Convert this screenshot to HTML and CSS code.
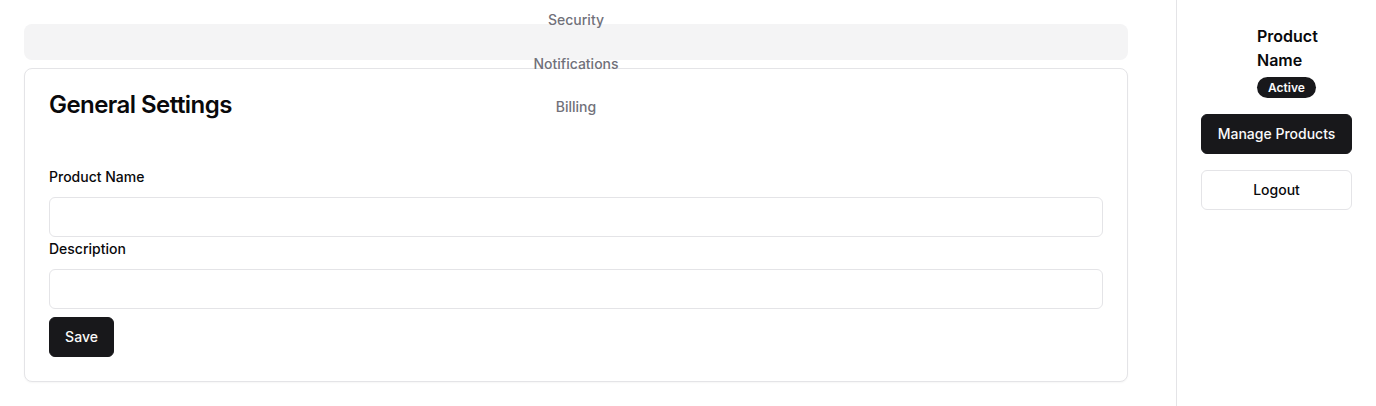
FILE: index.html
```html
<!DOCTYPE html>
<html lang="en">
<head>
<meta charset="utf-8">
<title>Settings</title>
<link rel="stylesheet" href="styles.css">
</head>
<body>
<div class="app">
  <main class="main">
    <div class="tablist">
      <div class="tabs">
        <button class="tab">Security</button>
        <button class="tab">Notifications</button>
        <button class="tab">Billing</button>
      </div>
    </div>
    <section class="card">
      <h2 class="card-title">General Settings</h2>
      <form class="form">
        <label class="label" for="pname">Product Name</label>
        <input class="input" id="pname" type="text">
        <label class="label label-2" for="pdesc">Description</label>
        <input class="input" id="pdesc" type="text">
        <button class="btn btn-primary btn-save" type="button">Save</button>
      </form>
    </section>
  </main>
  <aside class="sidebar">
    <div class="product">
      <div class="avatar"></div>
      <div class="product-info">
        <div class="product-name">Product Name</div>
        <span class="badge">Active</span>
      </div>
    </div>
    <button class="btn btn-primary btn-block">Manage Products</button>
    <button class="btn btn-outline btn-block">Logout</button>
  </aside>
</div>
</body>
</html>
```

FILE: styles.css
```css
* { box-sizing: border-box; }
html, body { margin: 0; padding: 0; }
body {
  font-family: Inter, "Noto Sans", "Liberation Sans", sans-serif;
  color: #09090b;
  background: #fff;
}
.app {
  display: flex;
  min-height: 100vh;
}
.main {
  flex: 1;
  padding: 24px 48px 24px 24px;
}
.tablist {
  height: 36px;
  background: #f4f4f5;
  border-radius: 8px;
  padding: 4px;
}
.tabs {
  display: flex;
  flex-direction: column;
  align-items: center;
  gap: 15.5px;
  margin-top: -22px;
}
.tab {
  font: inherit;
  font-size: 14px;
  font-weight: 500;
  line-height: 20px;
  color: #71717a;
  background: transparent;
  border: 0;
  padding: 4px 12px;
}
.card {
  margin-top: 8px;
  border: 1px solid #e4e4e7;
  border-radius: 8px;
  background: #fff;
  padding: 24px;
  box-shadow: 0 1px 2px rgba(0,0,0,0.04);
}
.card-title {
  margin: 0;
  font-size: 24px;
  font-weight: 600;
  line-height: 24px;
  letter-spacing: -0.55px;
}
.form {
  display: flex;
  flex-direction: column;
  align-items: flex-start;
  margin-top: 50px;
}
.label {
  font-size: 14px;
  font-weight: 500;
  line-height: 20px;
  color: #09090b;
  margin-bottom: 10px;
}
.label-2 { margin-top: 2px; }
.input {
  width: 100%;
  height: 40px;
  border: 1px solid #e4e4e7;
  border-radius: 6px;
  background: #fff;
  font: inherit;
  font-size: 14px;
  padding: 8px 12px;
}
.btn {
  font: inherit;
  font-size: 14px;
  font-weight: 500;
  line-height: 20px;
  height: 40px;
  border-radius: 6px;
  padding: 0 8px;
  white-space: nowrap;
  cursor: pointer;
}
.btn-primary {
  background: #18181b;
  color: #fafafa;
  border: 1px solid #18181b;
}
.btn-outline {
  background: #fff;
  color: #09090b;
  border: 1px solid #e4e4e7;
}
.btn-save {
  margin-top: 8px;
  width: 65px;
}
.sidebar {
  width: 200px;
  flex: none;
  border-left: 1px solid #e4e4e7;
  padding: 24px;
  display: flex;
  flex-direction: column;
  gap: 16px;
}
.product {
  display: flex;
  gap: 16px;
}
.avatar {
  width: 40px;
  height: 40px;
  flex: none;
}
.product-info {
  display: flex;
  flex-direction: column;
  align-items: flex-start;
}
.product-name {
  font-size: 16px;
  font-weight: 600;
  line-height: 24px;
}
.badge {
  margin-top: 5px;
  background: #18181b;
  color: #fafafa;
  font-size: 12px;
  font-weight: 600;
  line-height: 17px;
  padding: 2px 11px;
  border-radius: 999px;
}
.btn-block {
  width: 100%;
}
```
